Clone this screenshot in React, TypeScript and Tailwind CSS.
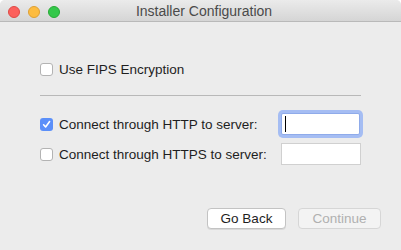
import React from "react";

function Check({ checked }: { checked?: boolean }) {
  if (checked) {
    return (
      <div className="w-[13px] h-[13px] rounded-[3px] bg-[#5b8ff9] flex items-center justify-center shrink-0">
        <svg width="9" height="9" viewBox="0 0 9 9">
          <path d="M1.6 4.8 L3.6 7 L7.6 1.6" fill="none" stroke="white" strokeWidth="1.6" strokeLinecap="round" strokeLinejoin="round" />
        </svg>
      </div>
    );
  }
  return <div className="w-[13px] h-[13px] rounded-[3px] bg-white border border-[#b3b3b3] shrink-0" />;
}

export default function App() {
  return (
    <div
      className="w-[401px] h-[250px] bg-[#ececec] flex flex-col overflow-hidden rounded-t-[5px] text-[#1e1e1e]"
      style={{ fontFamily: '"Liberation Sans", Arial, sans-serif' }}
    >
      <div className="h-[22px] shrink-0 bg-gradient-to-b from-[#ebebeb] to-[#d5d5d5] border-b border-[#b9b9b9] flex items-center relative">
        <div className="flex items-center gap-[8px] pl-[8px] pt-[3px]">
          <div className="w-[12px] h-[12px] rounded-full bg-[#fc605c] border border-[#de4a45]" />
          <div className="w-[12px] h-[12px] rounded-full bg-[#fdbc40] border border-[#dea034]" />
          <div className="w-[12px] h-[12px] rounded-full bg-[#34c84a] border border-[#27aa35]" />
        </div>
        <div className="absolute inset-0 flex items-center justify-center pl-[7px] pt-[2px] text-[14px] text-[#4a4a4a]">
          Installer Configuration
        </div>
      </div>
      <div className="flex flex-col px-[40px] text-[13.5px]">
        <div className="mt-[37px] h-[21px] flex items-center gap-[6px]">
          <Check />
          <span className="pt-[2px]">Use FIPS Encryption</span>
        </div>
        <div className="mt-[15px] h-px bg-[#b8b8b8]" />
        <div className="mt-[17px] h-[22px] flex items-center justify-between">
          <div className="flex items-center gap-[6px]">
            <Check checked />
            <span className="pt-[2px]">Connect through HTTP to server:</span>
          </div>
          <div className="w-[79px] h-[22px] bg-white border border-[#8fabea] rounded-[2px] ring-[3px] ring-[#a5bdf3] flex items-center pl-[3px] mr-[1px]">
            <div className="w-px h-[16px] bg-black" />
          </div>
        </div>
        <div className="mt-[8px] h-[22px] flex items-center justify-between">
          <div className="flex items-center gap-[6px]">
            <Check />
            <span className="pt-[2px]">Connect through HTTPS to server:</span>
          </div>
          <div className="w-[80px] h-[22px] bg-white border border-[#d0d0d0]" />
        </div>
      </div>
      <div className="mt-[43px] flex justify-end gap-[12px] pr-[20px] text-[13.5px]">
        <div className="w-[79px] h-[21px] bg-white border border-[#c3c3c3] rounded-[4px] shadow-[0_1px_0_rgba(0,0,0,0.08)] flex items-center justify-center pt-[1px] text-[#1e1e1e]">
          Go Back
        </div>
        <div className="w-[83px] h-[21px] bg-[#f3f3f3] border border-[#d6d6d6] rounded-[4px] flex items-center justify-center pt-[1px] text-[#b0b0b0]">
          Continue
        </div>
      </div>
    </div>
  );
}
